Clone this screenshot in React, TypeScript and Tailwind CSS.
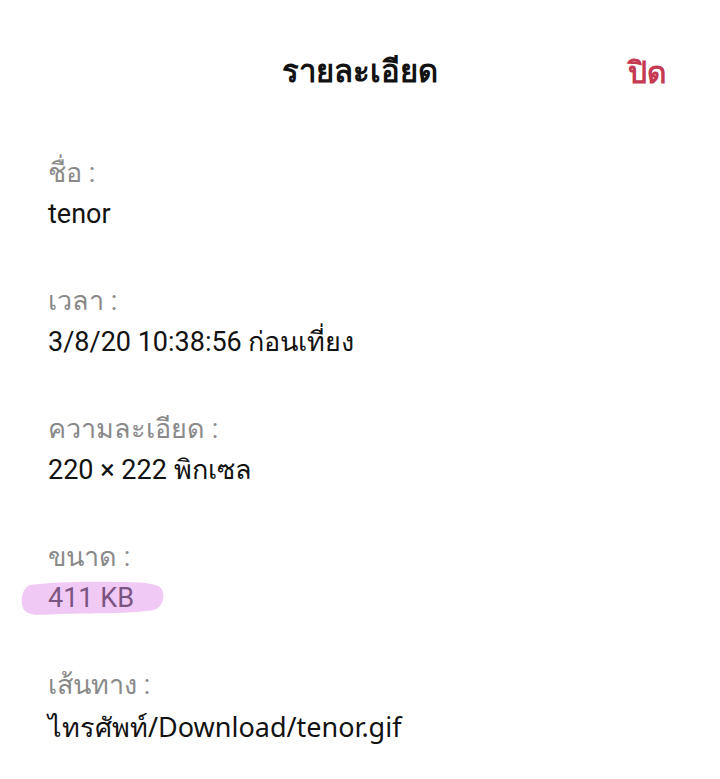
const fields = [
  { label: "ชื่อ :", value: "tenor" },
  { label: "เวลา :", value: "3/8/20 10:38:56 ก่อนเที่ยง" },
  { label: "ความละเอียด :", value: "220 × 222 พิกเซล" },
  { label: "ขนาด :", value: "411 KB", marked: true },
  { label: "เส้นทาง :", value: "ไทรศัพท์/Download/tenor.gif", path: true },
];

function Marker() {
  return (
    <svg
      className="absolute left-[-28px] top-[2px] h-[36px] w-[145px]"
      viewBox="0 0 145 36"
      fill="none"
    >
      <path
        d="M10 5 C30 2 70 1 100 2 C120 2 136 3 141 8 C146 15 143 27 134 30 C110 34 70 33 40 34 C24 35 10 36 5 31 C0 26 0 9 10 5 Z"
        fill="#f1c9f5"
      />
    </svg>
  );
}

export default function App() {
  return (
    <div
      className="min-h-[779px] w-[720px] bg-white text-[#121212]"
      style={{ fontFamily: "Roboto, 'Noto Sans', sans-serif" }}
    >
      <header className="grid h-[144px] grid-cols-[1fr_auto_1fr] items-center">
        <div />
        <h1 className="text-[31px] font-bold">รายละเอียด</h1>
        <div className="flex justify-end pr-[54px]">
          <button className="text-[30px] font-bold text-[#c43a52]">ปิด</button>
        </div>
      </header>

      <div className="flex flex-col gap-[46px] px-12 pt-[9px]">
        {fields.map((f) => (
          <div key={f.label} className="flex flex-col">
            <span className="text-[27px] leading-[41px] text-[#8a8a8a]">{f.label}</span>
            {f.marked ? (
              <span className="relative self-start text-[27px] leading-[41px]">
                <Marker />
                <span className="relative text-[#7a5582]">{f.value}</span>
              </span>
            ) : (
              <span
                className="text-[27px] leading-[41px]"
                style={f.path ? { fontFamily: "'Noto Sans', sans-serif" } : undefined}
              >
                {f.value}
              </span>
            )}
          </div>
        ))}
      </div>
    </div>
  );
}
